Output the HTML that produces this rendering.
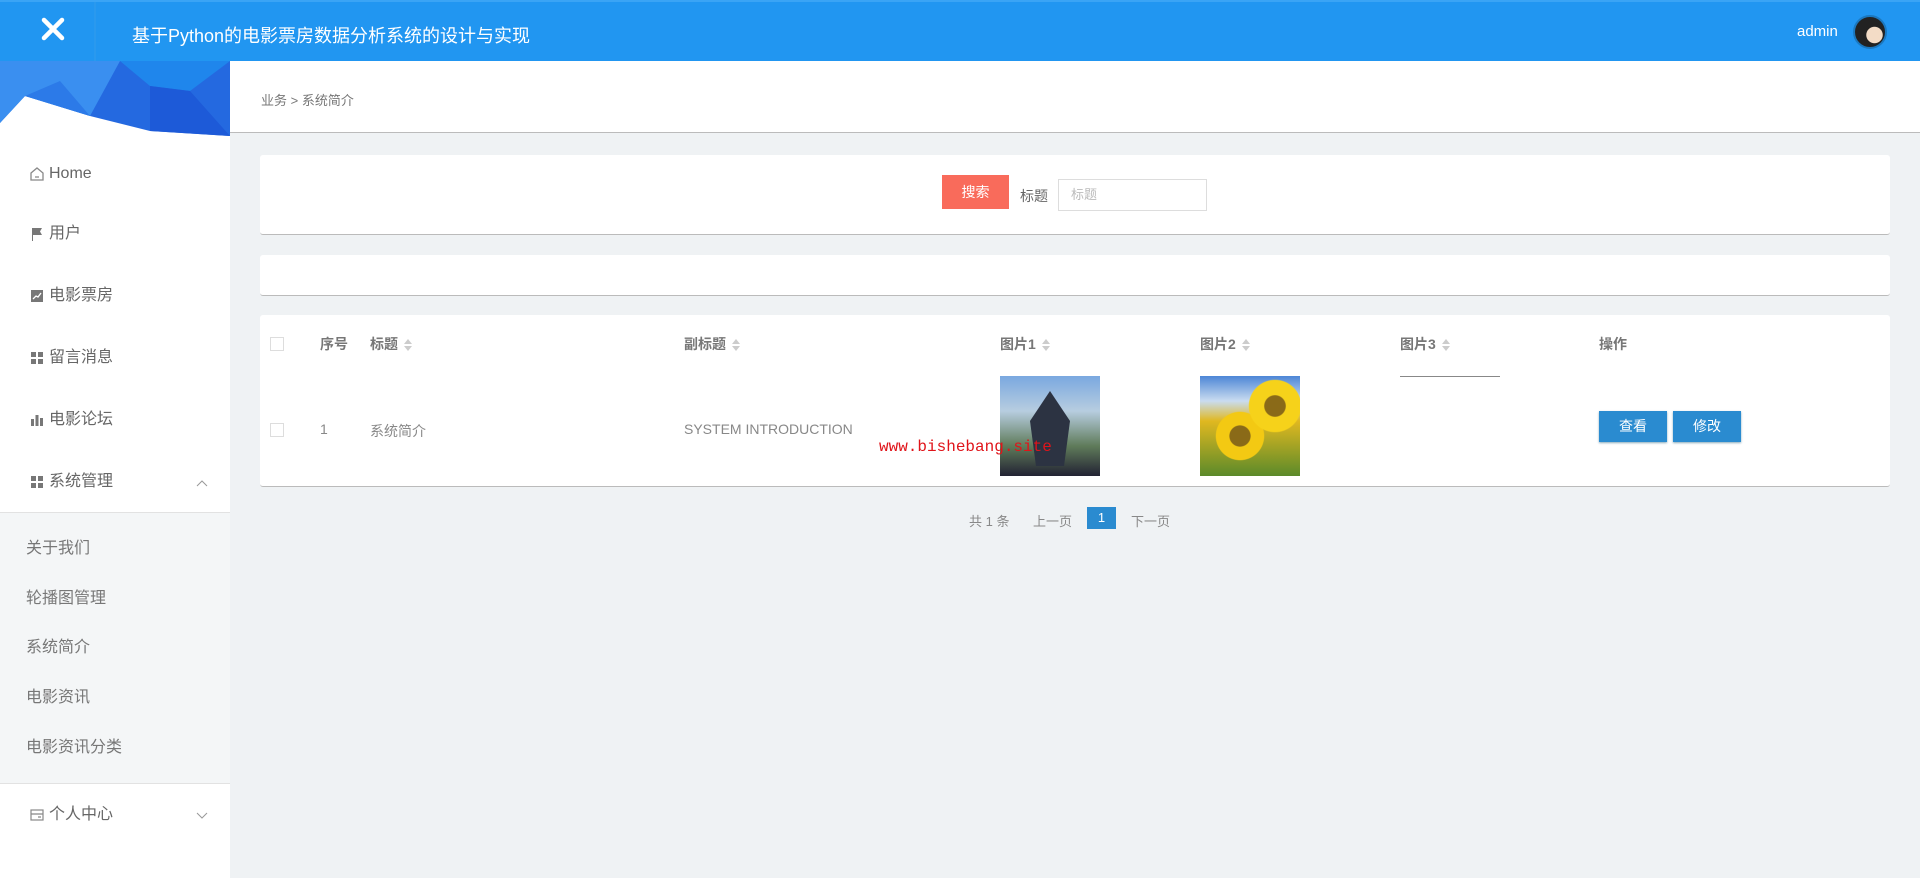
<!DOCTYPE html>
<html><head><meta charset="utf-8"><style>
*{margin:0;padding:0;box-sizing:border-box}
body{width:1920px;height:878px;overflow:hidden;background:#eff2f4;font-family:"Liberation Sans","Noto Sans CJK SC",sans-serif;position:relative;color:#666}
.a{position:absolute}
.hdr{left:0;top:0;width:1920px;height:61px;background:#2196f1;border-top:2px solid #3aa4f5}
.side{left:0;top:61px;width:230px;height:817px;background:#fff}
.mi{position:absolute;left:29px;font-size:16px;color:#666;display:flex;align-items:center;gap:4px;line-height:20px}
.si{position:absolute;left:26px;font-size:16px;color:#777;line-height:20px}
.card{background:#fff;border-bottom:1px solid #bbb;border-radius:3px}
.th{position:absolute;top:334px;font-size:14px;color:#777;font-weight:bold}
.td{position:absolute;top:421px;font-size:14px;color:#888}
.sort{display:inline-block;width:8px;height:12px;vertical-align:middle;margin-left:6px;position:relative}
.sort:before{content:"";position:absolute;left:0;top:0;border:4px solid transparent;border-bottom:5px solid #ccc;border-top:0}
.sort:after{content:"";position:absolute;left:0;top:7px;border:4px solid transparent;border-top:5px solid #ccc;border-bottom:0}
.cb{position:absolute;width:14px;height:14px;border:1px solid #ddd;left:270px}
.btn{position:absolute;top:411px;width:68px;height:31px;background:#2a8bd0;color:#fff;font-size:14px;text-align:center;line-height:31px;box-shadow:0 1px 2px #8ab}
</style></head><body>
<div class="a hdr">
 <svg class="a" style="left:40px;top:14px" width="26" height="26" viewBox="0 0 26 26"><path d="M4 4L22 22M22 4L4 22" stroke="#fff" stroke-width="4.5" stroke-linecap="round"/></svg>
 <div class="a" style="left:94px;top:0;width:2px;height:59px;background:#2a99ee"></div>
 <div class="a" style="left:132px;top:20px;color:#fff;font-size:18px">基于Python的电影票房数据分析系统的设计与实现</div>
 <div class="a" style="left:1797px;top:21px;color:#fff;font-size:15px">admin</div>
 <div class="a" style="left:1853px;top:13px;width:34px;height:34px;border-radius:50%;background:radial-gradient(circle at 65% 60%,#f3dcc6 0 30%,#222 32%);border:2px solid #1b78bf"></div>
</div>
<div class="a side">
 <svg class="a" style="left:0;top:0" width="230" height="75" viewBox="0 0 230 75"><polygon points="0,0 230,0 230,75 150,70 90,55 25,35 0,62" fill="#2469e0"/><polygon points="0,0 120,0 90,55 25,35 0,62" fill="#3a8ff0"/><polygon points="120,0 230,0 190,30 150,25" fill="#1f86ec"/><polygon points="150,25 190,30 230,75 150,70" fill="#1d5ad8"/><polygon points="25,35 60,20 90,55" fill="#2c7ae8"/></svg>
 <div class="mi" style="top:103px"><svg width="16" height="16" viewBox="0 0 16 16"><path d="M2 7L8 2L14 7V14H2Z M6 11H10" fill="none" stroke="#888" stroke-width="1.3"/></svg>Home</div>
 <div class="mi" style="top:163px"><svg width="16" height="16" viewBox="0 0 16 16"><path d="M3 2H13L11 5.5L13 9H4V15H3Z" fill="#777"/></svg>用户</div>
 <div class="mi" style="top:225px"><svg width="16" height="16" viewBox="0 0 16 16"><rect x="2" y="2" width="12" height="12" fill="#777"/><path d="M4 11L7 8L9 9L12 5" stroke="#fff" fill="none" stroke-width="1.3"/></svg>电影票房</div>
 <div class="mi" style="top:287px"><svg width="16" height="16" viewBox="0 0 16 16"><rect x="2" y="2" width="5" height="5" fill="#777"/><rect x="9" y="2" width="5" height="5" fill="#777"/><rect x="2" y="9" width="5" height="5" fill="#777"/><rect x="9" y="9" width="5" height="5" fill="#777"/></svg>留言消息</div>
 <div class="mi" style="top:349px"><svg width="16" height="16" viewBox="0 0 16 16"><rect x="2" y="7" width="3" height="7" fill="#777"/><rect x="6.5" y="3" width="3" height="11" fill="#777"/><rect x="11" y="6" width="3" height="8" fill="#777"/></svg>电影论坛</div>
 <div class="mi" style="top:411px"><svg width="16" height="16" viewBox="0 0 16 16"><rect x="2" y="2" width="5" height="5" fill="#777"/><rect x="9" y="2" width="5" height="5" fill="#777"/><rect x="2" y="9" width="5" height="5" fill="#777"/><rect x="9" y="9" width="5" height="5" fill="#777"/></svg>系统管理</div>
 <svg class="a" style="left:196px;top:418px" width="12" height="8"><path d="M1 7L6 2L11 7" stroke="#999" fill="none"/></svg>
 <div class="a" style="left:0;top:451px;width:230px;height:272px;background:#f4f6f7;border-top:1px solid #e2e2e2;border-bottom:1px solid #e2e2e2"></div>
 <div class="si" style="top:478px">关于我们</div>
 <div class="si" style="top:528px">轮播图管理</div>
 <div class="si" style="top:577px">系统简介</div>
 <div class="si" style="top:627px">电影资讯</div>
 <div class="si" style="top:677px">电影资讯分类</div>
 <div class="mi" style="top:744px"><svg width="16" height="16" viewBox="0 0 16 16"><rect x="2" y="3" width="12" height="10" fill="none" stroke="#888" stroke-width="1.2"/><path d="M2 7H14M9 10H12" stroke="#888" stroke-width="1.2"/></svg>个人中心</div>
 <svg class="a" style="left:196px;top:751px" width="12" height="8"><path d="M1 1L6 6L11 1" stroke="#999" fill="none"/></svg>
</div>
<div class="a" style="left:230px;top:61px;width:1690px;height:72px;background:#fff;border-bottom:1px solid #bbb"></div>
<div class="a" style="left:261px;top:90px;font-size:13px;color:#777">业务 &gt; 系统简介</div>
<div class="a card" style="left:260px;top:155px;width:1630px;height:80px"></div>
<div class="a" style="left:942px;top:175px;width:67px;height:34px;background:#f96b5b;color:#fff;font-size:14px;line-height:34px;text-align:center">搜索</div>
<div class="a" style="left:1020px;top:186px;font-size:14px;color:#666">标题</div>
<div class="a" style="left:1058px;top:179px;width:149px;height:32px;border:1px solid #ddd;font-size:13px;color:#bbb;line-height:30px;padding-left:12px">标题</div>
<div class="a card" style="left:260px;top:255px;width:1630px;height:41px"></div>
<div class="a card" style="left:260px;top:315px;width:1630px;height:172px"></div>
<div class="cb" style="top:337px"></div>
<div class="th" style="left:320px">序号</div>
<div class="th" style="left:370px">标题<span class="sort"></span></div>
<div class="th" style="left:684px">副标题<span class="sort"></span></div>
<div class="th" style="left:1000px">图片1<span class="sort"></span></div>
<div class="th" style="left:1200px">图片2<span class="sort"></span></div>
<div class="th" style="left:1400px">图片3<span class="sort"></span></div>
<div class="th" style="left:1599px">操作</div>
<div class="a" style="left:1400px;top:376px;width:100px;height:1px;background:#888"></div>
<div class="cb" style="top:423px"></div>
<div class="td" style="left:320px">1</div>
<div class="td" style="left:370px">系统简介</div>
<div class="td" style="left:684px">SYSTEM INTRODUCTION</div>
<div class="a" style="left:1000px;top:376px;width:100px;height:100px;background:linear-gradient(180deg,#7aa8e0 0%,#b7cde0 35%,#5f7b5a 70%,#223 100%)"><div class="a" style="left:30px;top:15px;width:40px;height:75px;background:#2c3342;clip-path:polygon(50% 0,100% 40%,85% 100%,15% 100%,0 40%)"></div></div>
<div class="a" style="left:1200px;top:376px;width:100px;height:100px;background:radial-gradient(circle at 75% 30%,#8a6a18 0 10%,#f6d21a 11% 25%,transparent 26%),radial-gradient(circle at 40% 60%,#8a6a18 0 12%,#f3c913 13% 28%,transparent 29%),linear-gradient(180deg,#4c86d6 0%,#c9dcf0 25%,#e0b820 45%,#5b8a2a 100%)"></div>
<div class="a" style="left:879px;top:438px;font-family:'Liberation Mono',monospace;font-size:16px;color:#e0141a">www.bishebang.site</div>
<div class="btn" style="left:1599px">查看</div>
<div class="btn" style="left:1673px">修改</div>
<div class="a" style="left:969px;top:511px;font-size:13px;color:#888">共 1 条</div>
<div class="a" style="left:1033px;top:511px;font-size:13px;color:#888">上一页</div>
<div class="a" style="left:1087px;top:507px;width:29px;height:22px;background:#2a8bd0;color:#fff;font-size:13px;text-align:center;line-height:22px">1</div>
<div class="a" style="left:1131px;top:511px;font-size:13px;color:#888">下一页</div>
</body></html>
